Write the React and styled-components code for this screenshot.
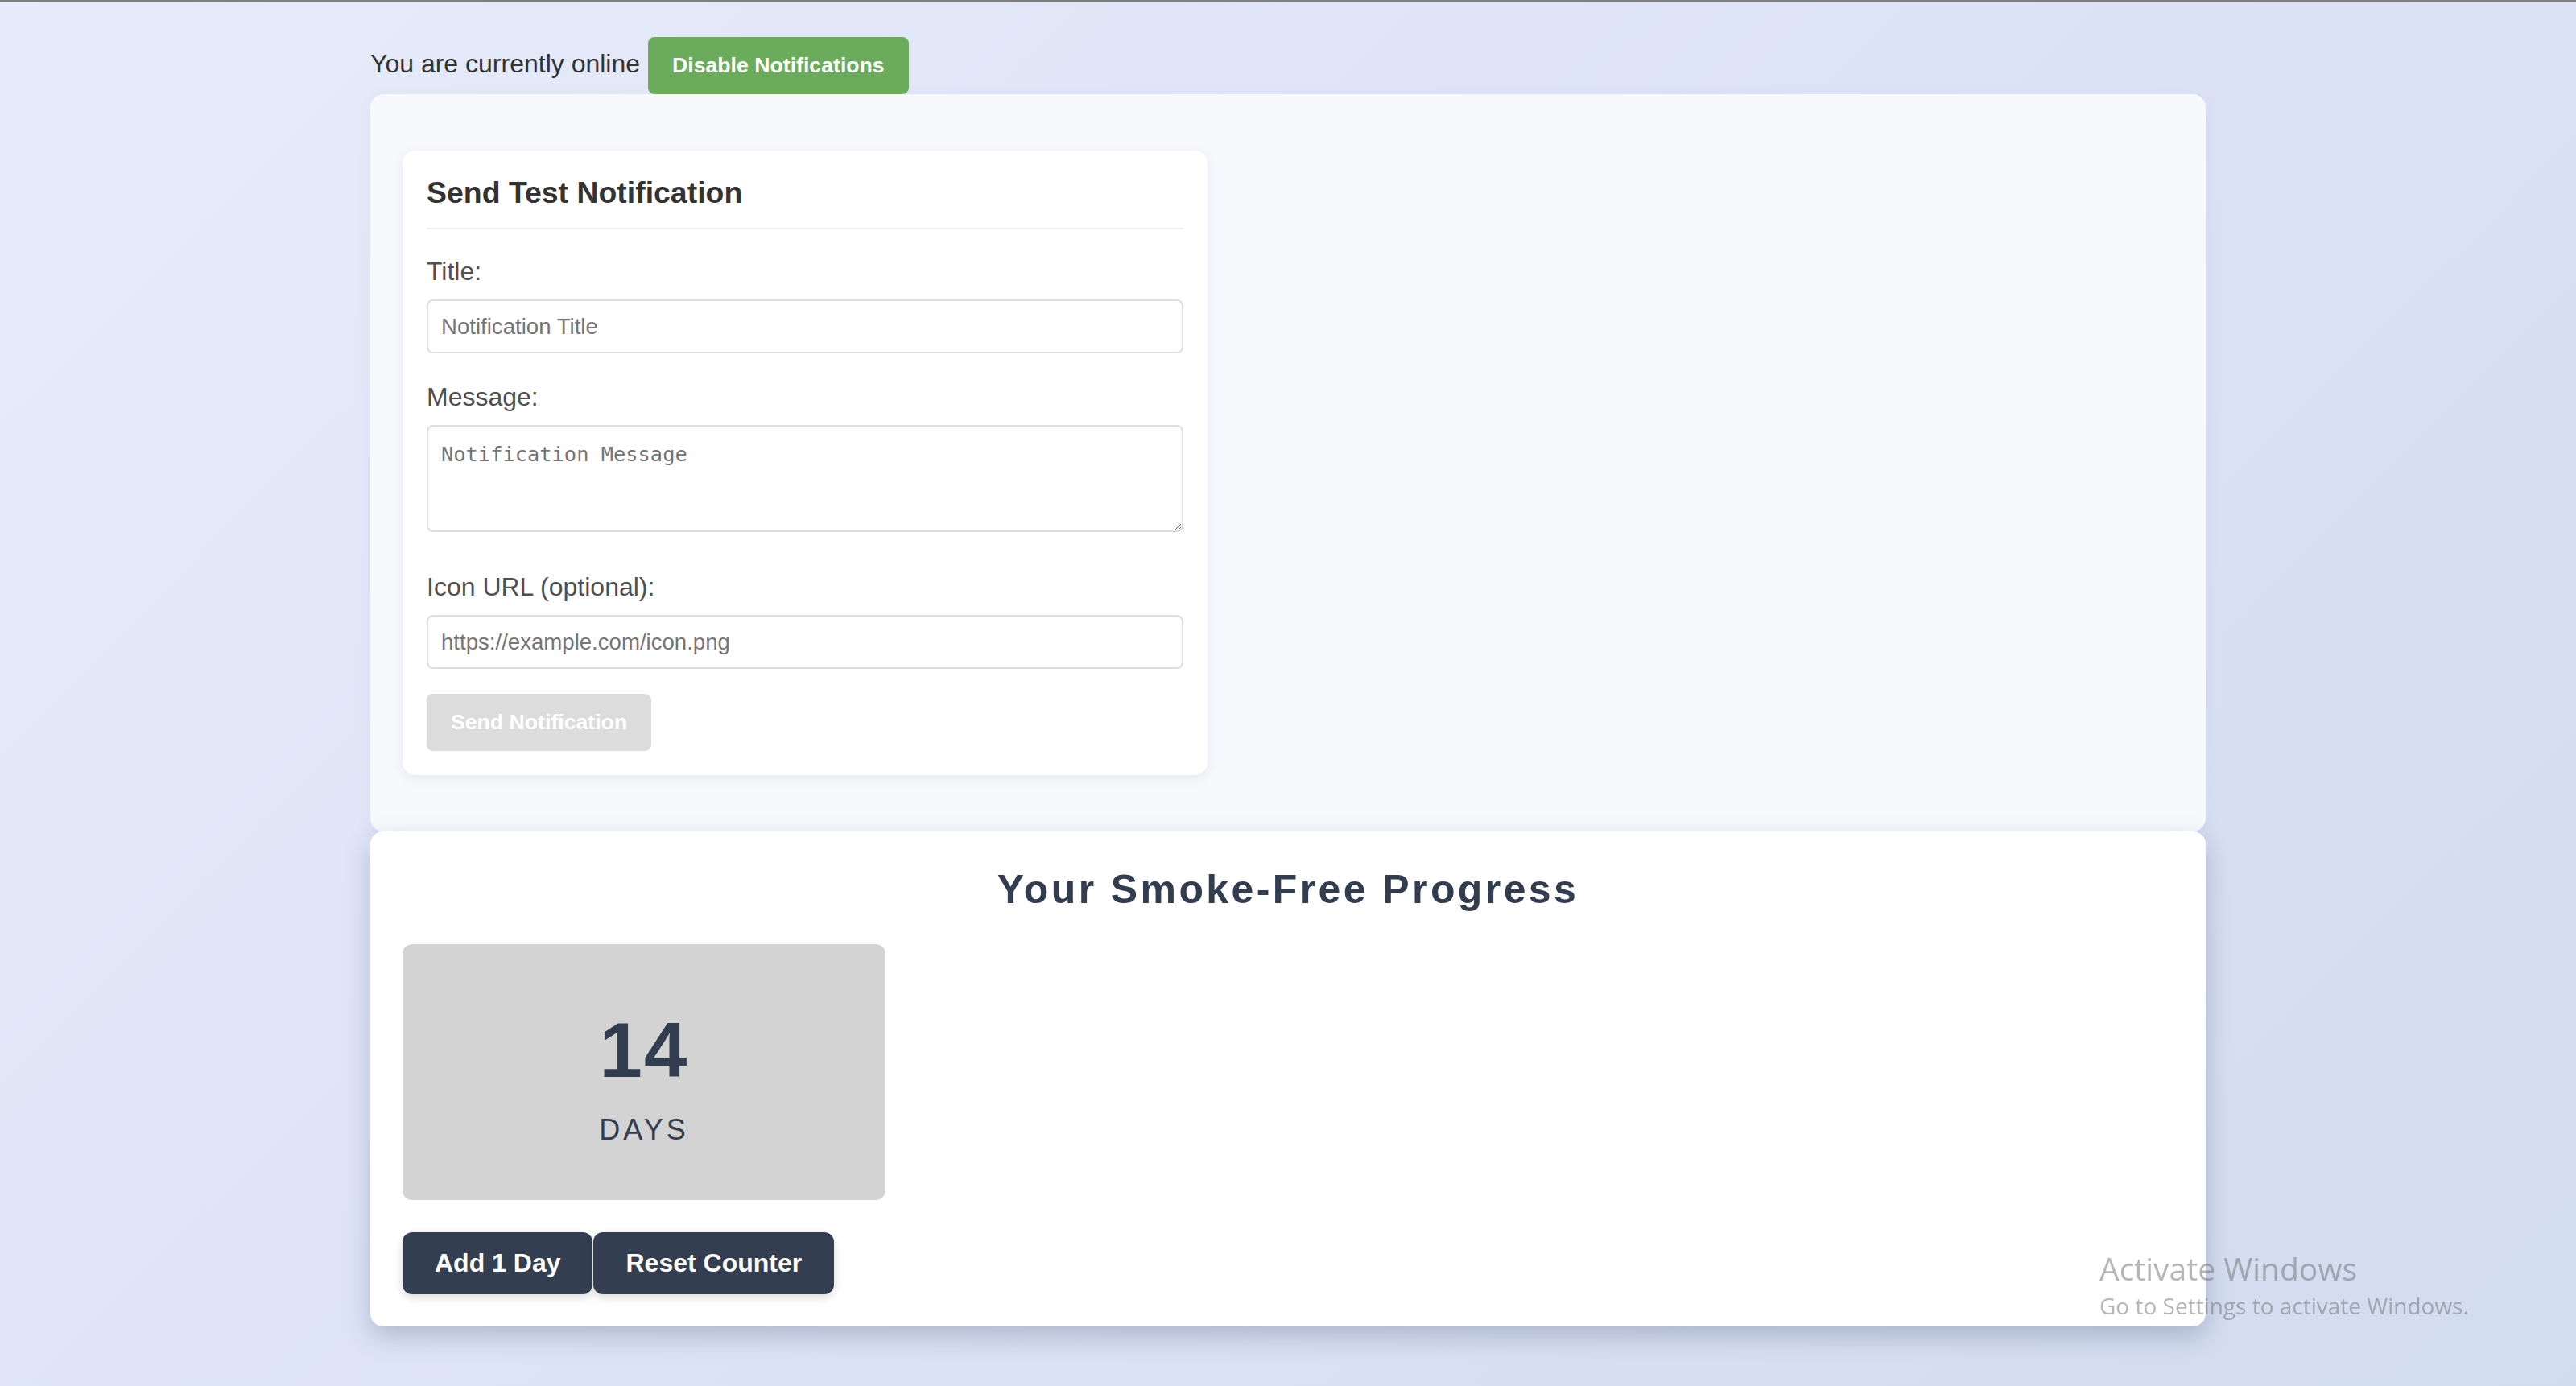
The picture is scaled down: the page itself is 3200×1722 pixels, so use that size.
import React, { useState } from 'react';
import styled, { createGlobalStyle } from 'styled-components';

const GlobalStyle = createGlobalStyle`
  html, body {
    margin: 0;
    padding: 0;
  }
  body {
    min-height: 100vh;
    box-sizing: border-box;
    border-top: 2px solid #7f7f80;
    background: linear-gradient(135deg, #e7ecfa 0%, #dce3f5 50%, #d2dcef 100%);
    font-family: "Liberation Sans", Arial, sans-serif;
    color: #333;
  }
  * {
    box-sizing: border-box;
  }
`;

const Container = styled.div`
  width: 2280px;
  margin: 0 auto;
  padding-top: 44px;
`;

const StatusRow = styled.div`
  display: flex;
  align-items: baseline;
  gap: 10px;
`;

const StatusText = styled.span`
  font-size: 32px;
  color: #333;
`;

const ToggleButton = styled.button`
  font-family: "Liberation Sans", Arial, sans-serif;
  font-size: 26.67px;
  font-weight: bold;
  color: #fff;
  background: #6aac5c;
  border: none;
  border-radius: 8px;
  padding: 20px 30px;
  cursor: pointer;
`;

const Panel = styled.section`
  border-radius: 16px;
  background: ${p => p.$bg};
  padding: ${p => p.$pad};
  box-shadow: ${p => p.$shadow};
`;

const Card = styled.div`
  width: 1000px;
  background: #fff;
  border-radius: 16px;
  padding: 30px;
  box-shadow: 0 4px 16px rgba(30, 40, 70, 0.08);
`;

const CardTitle = styled.h3`
  margin: 0 0 34px;
  font-size: 37.44px;
  line-height: 45px;
  font-weight: bold;
  color: #333;
  padding-bottom: 21px;
  border-bottom: 2px solid #eee;
`;

const Field = styled.div`
  margin-bottom: ${p => p.$gap}px;
`;

const Label = styled.label`
  display: block;
  font-size: 32px;
  line-height: 37px;
  color: #505050;
  margin-bottom: 16px;
`;

const TextInput = styled.input`
  display: block;
  width: 100%;
  height: 67px;
  padding: 16px;
  border: 2px solid #ddd;
  border-radius: 8px;
  font-family: "Liberation Sans", Arial, sans-serif;
  font-size: 27.6px;
  color: #333;
  background: #fff;
  &::placeholder {
    color: #757575;
  }
`;

const TextArea = styled.textarea`
  display: block;
  width: 100%;
  height: 133px;
  padding: 19px 16px 16px;
  border: 2px solid #ddd;
  border-radius: 8px;
  font-family: "DejaVu Sans Mono", "Liberation Mono", monospace;
  font-size: 25.4px;
  color: #333;
  background: #fff;
  &::placeholder {
    color: #757575;
  }
`;

const SendButton = styled.button`
  font-family: "Liberation Sans", Arial, sans-serif;
  font-size: 26.67px;
  font-weight: bold;
  color: #fff;
  background: #dcdcdc;
  border: none;
  border-radius: 8px;
  padding: 20px 30px;
  cursor: not-allowed;
`;

const ProgressTitle = styled.h2`
  margin: 0 0 35px;
  text-align: center;
  font-size: 50px;
  line-height: 65px;
  font-weight: bold;
  letter-spacing: 3.4px;
  color: #323d4f;
`;

const CounterBox = styled.div`
  width: 600px;
  height: 318px;
  background: #d3d3d3;
  border-radius: 12px;
  padding-top: 77px;
  display: flex;
  flex-direction: column;
  align-items: center;
  color: #323d4f;
`;

const CounterNumber = styled.div`
  font-size: 96px;
  line-height: 110px;
  font-weight: bold;
  letter-spacing: 2px;
  margin-bottom: 23px;
`;

const CounterUnit = styled.div`
  font-size: 36px;
  line-height: 41px;
  letter-spacing: 4px;
  text-transform: uppercase;
`;

const ButtonRow = styled.div`
  display: flex;
  gap: 1px;
  margin-top: 40px;
`;

const DarkButton = styled.button`
  font-family: "Liberation Sans", Arial, sans-serif;
  font-size: 32px;
  font-weight: bold;
  color: #fff;
  background: #333e50;
  border: none;
  border-radius: 12px;
  padding: 20px 40px;
  box-shadow: 0 4px 12px rgba(0, 0, 0, 0.15);
  cursor: pointer;
`;

const Watermark = styled.div`
  position: fixed;
  left: 2608px;
  top: 1553px;
  font-family: "Open Sans", "Noto Sans", sans-serif;
  color: rgba(110, 110, 110, 0.5);
  pointer-events: none;
`;

const WatermarkLine = styled.div`
  font-size: ${p => p.$size}px;
  line-height: 46px;
`;

export default function App() {
  const [days, setDays] = useState(14);
  const [title, setTitle] = useState('');
  const [message, setMessage] = useState('');
  const [icon, setIcon] = useState('');

  return (
    <>
      <GlobalStyle />
      <Container>
        <StatusRow>
          <StatusText>You are currently online</StatusText>
          <ToggleButton>Disable Notifications</ToggleButton>
        </StatusRow>

        <Panel $bg="#f7f9fd" $pad="70px 40px" $shadow="0 4px 20px rgba(40, 60, 110, 0.06)">
          <Card>
            <CardTitle>Send Test Notification</CardTitle>
            <Field $gap={36}>
              <Label>Title:</Label>
              <TextInput
                placeholder="Notification Title"
                value={title}
                onChange={e => setTitle(e.target.value)}
              />
            </Field>
            <Field $gap={50}>
              <Label>Message:</Label>
              <TextArea
                placeholder="Notification Message"
                value={message}
                onChange={e => setMessage(e.target.value)}
              />
            </Field>
            <Field $gap={31}>
              <Label>Icon URL (optional):</Label>
              <TextInput
                placeholder="https://example.com/icon.png"
                value={icon}
                onChange={e => setIcon(e.target.value)}
              />
            </Field>
            <SendButton disabled>Send Notification</SendButton>
          </Card>
        </Panel>

        <Panel $bg="#fff" $pad="40px" $shadow="0 12px 32px rgba(40, 55, 90, 0.25)">
          <ProgressTitle>Your Smoke-Free Progress</ProgressTitle>
          <CounterBox>
            <CounterNumber>{days}</CounterNumber>
            <CounterUnit>Days</CounterUnit>
          </CounterBox>
          <ButtonRow>
            <DarkButton onClick={() => setDays(d => d + 1)}>Add 1 Day</DarkButton>
            <DarkButton onClick={() => setDays(0)}>Reset Counter</DarkButton>
          </ButtonRow>
        </Panel>
      </Container>

      <Watermark>
        <WatermarkLine $size={39}>Activate Windows</WatermarkLine>
        <WatermarkLine $size={28}>Go to Settings to activate Windows.</WatermarkLine>
      </Watermark>
    </>
  );
}
